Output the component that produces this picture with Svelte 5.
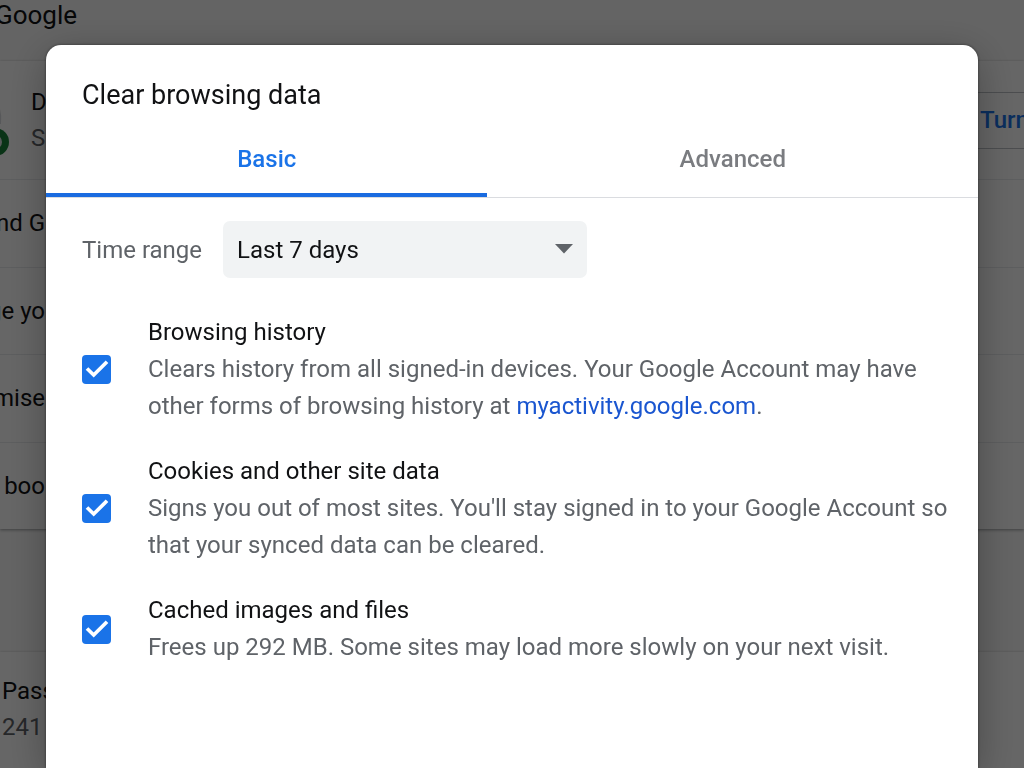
<script>
  let activeTab = $state('basic');
  let timeRange = $state('7d');

  let items = $state([
    {
      id: 'history',
      title: 'Browsing history',
      text: 'Clears history from all signed-in devices. Your Google Account may have other forms of browsing history at ',
      link: 'myactivity.google.com',
      checked: true
    },
    {
      id: 'cookies',
      title: 'Cookies and other site data',
      text: "Signs you out of most sites. You'll stay signed in to your Google Account so that your synced data can be cleared.",
      checked: true
    },
    {
      id: 'cache',
      title: 'Cached images and files',
      text: 'Frees up 292 MB. Some sites may load more slowly on your next visit.',
      checked: true
    }
  ]);

  const rows = ['nd G', 'ge yo', 'mise', 'boo'];
</script>

<div class="page" inert>
  <h2>Google</h2>
  <div class="card account">
    <div class="row profile">
      <svg class="avatar" width="31" height="76" viewBox="0 0 31 76">
        <path d="M0 27q2 7 1 15H0z" fill="#dadce0" />
        <circle cx="-5" cy="60" r="14" fill="#188038" />
        <circle cx="-5" cy="60" r="7" fill="#dadce0" />
      </svg>
      <div class="name">
        <div>D</div>
        <div class="sub">S</div>
      </div>
      <button class="turn-off">Turn</button>
    </div>
    {#each rows as row}
      <div class="row"><span class="clip">{row}</span></div>
    {/each}
  </div>
  <div class="card autofill">
    <div>Pass</div>
    <div class="sub">241</div>
  </div>
</div>

<div class="backdrop">
  <div class="dialog" role="dialog" aria-modal="true" aria-labelledby="title">
    <h1 id="title">Clear browsing data</h1>

    <div class="tabs" role="tablist">
      <button role="tab" class="basic" class:active={activeTab === 'basic'} aria-selected={activeTab === 'basic'} onclick={() => (activeTab = 'basic')}>Basic</button>
      <button role="tab" class="advanced" class:active={activeTab === 'advanced'} aria-selected={activeTab === 'advanced'} onclick={() => (activeTab = 'advanced')}>Advanced</button>
    </div>

    <div class="range">
      <label for="range">Time range</label>
      <div class="select">
        <select id="range" bind:value={timeRange}>
          <option value="7d">Last 7 days</option>
        </select>
        <svg width="18" height="10" viewBox="0 0 18 10"><path d="M0 0h18L9 9.5z" fill="#5f6368" /></svg>
      </div>
    </div>

    {#each items as item (item.id)}
      <div class="item">
        <span class="check">
          <input type="checkbox" id={item.id} bind:checked={item.checked} />
          {#if item.checked}
            <svg viewBox="0 0 29 29"><path d="M5 13.5l6.7 6.5L25 6.8" fill="none" stroke="#fff" stroke-width="3.7" /></svg>
          {/if}
        </span>
        <div class="text">
          <label for={item.id}>{item.title}</label>
          <p>{item.text}{#if item.link}<a href="https://myactivity.google.com">{item.link}</a>.{/if}</p>
        </div>
      </div>
    {/each}
  </div>
</div>

<style>
  :global(body) {
    margin: 0;
    overflow: hidden;
    background: #fafafa;
  }

  .page, .backdrop, button, select {
    font-family: Roboto, "Liberation Sans", sans-serif;
    font-size: 24px;
    color: #111214;
  }

  .page {
    height: 100vh;
    overflow: hidden;
    line-height: 36px;
  }
  h2 {
    margin: 0;
    height: 61px;
    box-sizing: border-box;
    text-indent: -5px;
    font-size: 26px;
    font-weight: 400;
    line-height: 30px;
  }
  .card { background: #fff; box-shadow: 0 1px 3px rgba(60, 64, 67, 0.5); }
  .account {
    display: grid;
    grid-template-rows: 118px repeat(4, 1fr);
    height: 468px;
  }
  .row { display: flex; align-items: center; }
  .row + .row { border-top: 1px solid #e8eaed; }
  .clip {
    display: flex;
    justify-content: flex-end;
    width: 45px;
    white-space: nowrap;
  }
  .avatar { flex: none; }
  .name { flex: 1; }
  .sub { color: #5f6368; }
  .turn-off {
    height: 57px;
    width: 62px;
    padding: 0 0 0 17px;
    border: 1px solid #bdc1c6;
    border-right: 0;
    background: none;
    text-align: left;
    font-weight: 500;
    color: #1a73e8;
  }
  .autofill {
    margin-top: 123px;
    padding: 21px 2px;
    height: 120px;
  }

  .backdrop {
    position: fixed;
    inset: 0;
    display: flex;
    padding: 45px 46px 0;
    background: rgba(0, 0, 0, 0.6);
  }
  .dialog {
    flex: 1;
    min-width: 0;
    background: #fff;
    border-radius: 15px 15px 0 0;
    box-shadow: 0 0 3px rgba(0, 0, 0, 0.5), 0 10px 40px rgba(0, 0, 0, 0.3);
  }
  h1 {
    margin: 0;
    padding: 32px 36px 0;
    font-size: 27px;
    font-weight: 400;
    line-height: 36px;
  }

  .tabs {
    display: flex;
    margin-top: 8px;
    border-bottom: 1px solid #dadce0;
  }
  .tabs button {
    position: relative;
    height: 76px;
    padding: 0;
    border: 0;
    background: none;
    font-weight: 500;
    color: #7a7c80;
  }
  .tabs .basic { flex: 9; }
  .tabs .advanced { flex: 10; }
  .tabs .active { color: #1a73e8; }
  .tabs .active::after {
    content: '';
    position: absolute;
    left: 0;
    right: 0;
    bottom: 0;
    height: 4px;
    background: #1a6be0;
  }

  .range {
    display: flex;
    align-items: center;
    gap: 21px;
    padding: 23px 36px 0;
    margin-bottom: 36px;
    color: #5f6368;
  }
  .select { position: relative; }
  select {
    appearance: none;
    width: 364px;
    height: 57px;
    padding: 0 14px;
    border: 0;
    border-radius: 7px;
    background: #f1f3f4;
  }
  .select svg { position: absolute; right: 14px; top: 23px; pointer-events: none; }

  .item {
    display: flex;
    align-items: center;
    gap: 37px;
    padding: 0 24px 0 36px;
    margin-bottom: 28px;
  }
  .check { position: relative; flex: none; width: 29px; height: 29px; }
  .check input {
    appearance: none;
    display: block;
    width: 29px;
    height: 29px;
    margin: 0;
    border: 3px solid #5f6368;
    border-radius: 4px;
  }
  .check input:checked { border: 0; background: #1a73e8; }
  .check svg { position: absolute; inset: 0; pointer-events: none; }
  .text { flex: 1; }
  .text label { display: block; line-height: 37px; }
  .text p { margin: 0; line-height: 37px; color: #5f6368; }
  a { color: #1a56d0; text-decoration: none; }
</style>
